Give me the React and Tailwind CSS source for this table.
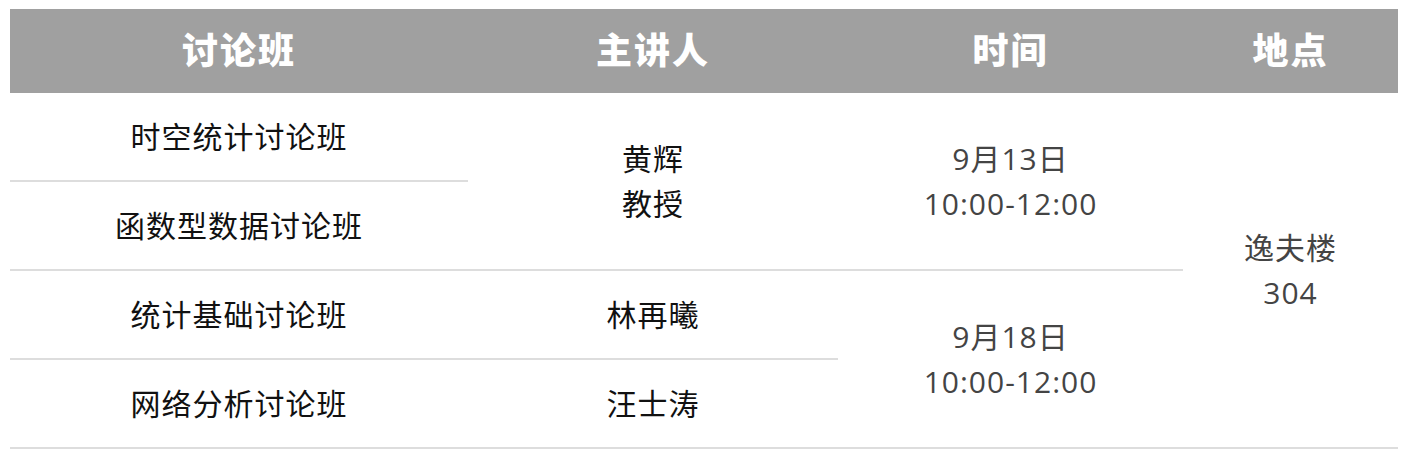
import React from "react";

const font = { fontFamily: '"Open Sans", "Noto Sans CJK SC", sans-serif' };

const Head = ({ children }) => (
  <div className="flex items-center justify-center bg-[#a0a0a0] text-[36px] font-black tracking-[2px] text-white">
    {children}
  </div>
);

const Cell = ({ className = "", children }) => (
  <div
    className={
      "flex flex-col items-center justify-center border-b-2 border-[#dddddd] text-center text-[30px] leading-[45px] tracking-[1px] " +
      className
    }
  >
    {children}
  </div>
);

export default function App() {
  return (
    <div className="min-h-[465px] bg-white pt-[9px] pl-[10px]" style={font}>
      <div className="grid w-[1388px] grid-cols-[458px_370px_345px_215px] grid-rows-[84px_89px_89px_89px_89px]">
        <Head>讨论班</Head>
        <Head>主讲人</Head>
        <Head>时间</Head>
        <Head>地点</Head>

        <Cell className="text-[#111]">时空统计讨论班</Cell>
        <Cell className="row-span-2 text-[#111]">
          <span>黄辉</span>
          <span>教授</span>
        </Cell>
        <Cell className="row-span-2 text-[#444]">
          <span>9月13日</span>
          <span>10:00-12:00</span>
        </Cell>
        <Cell className="row-span-4 text-[#444]">
          <span>逸夫楼</span>
          <span>304</span>
        </Cell>

        <Cell className="text-[#111]">函数型数据讨论班</Cell>

        <Cell className="text-[#111]">统计基础讨论班</Cell>
        <Cell className="text-[#111]">林再曦</Cell>
        <Cell className="row-span-2 text-[#444]">
          <span>9月18日</span>
          <span>10:00-12:00</span>
        </Cell>

        <Cell className="text-[#111]">网络分析讨论班</Cell>
        <Cell className="text-[#111]">汪士涛</Cell>
      </div>
    </div>
  );
}
